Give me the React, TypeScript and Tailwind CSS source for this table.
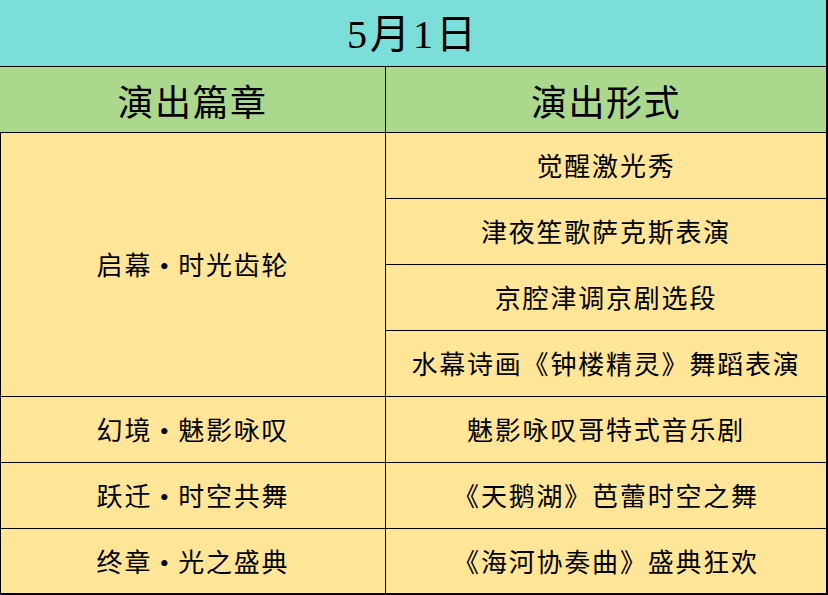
const font = "font-['Liberation_Serif','Noto_Sans_CJK_SC',serif]";

const rightRows = [
  "觉醒激光秀",
  "津夜笙歌萨克斯表演",
  "京腔津调京剧选段",
  "水幕诗画《钟楼精灵》舞蹈表演",
];

const pairs = [
  { left: ["幻境", "魅影咏叹"], right: "魅影咏叹哥特式音乐剧" },
  { left: ["跃迁", "时空共舞"], right: "《天鹅湖》芭蕾时空之舞" },
  { left: ["终章", "光之盛典"], right: "《海河协奏曲》盛典狂欢" },
];

function Chapter({ parts }: { parts: string[] }) {
  return (
    <span>
      {parts[0]}
      <span className="inline-block w-[1em] text-center">•</span>
      {parts[1]}
    </span>
  );
}

export default function App() {
  const bodyText = "text-[26px] tracking-[1.8px] text-black";
  return (
    <div className={`w-[828px] h-[595px] border-r-2 border-b-2 border-black ${font}`}>
      <div className="flex h-[67px] items-center justify-center border-b border-black bg-[#7bded8] pt-1 text-[40px] tracking-[3px] text-black">
        5月1日
      </div>
      <div className="grid grid-cols-[386px_1fr]">
        <div className="flex h-[66px] items-center justify-center border-b border-r border-black bg-[#acd88e] pt-2 text-[36px] tracking-[1.5px]">
          演出篇章
        </div>
        <div className="flex h-[66px] items-center justify-center border-b border-black bg-[#acd88e] pt-2 text-[36px] tracking-[1.5px]">
          演出形式
        </div>

        <div className={`row-span-4 flex items-center justify-center border-b border-l border-r border-black bg-[#ffe598] pt-1 ${bodyText}`}>
          <Chapter parts={["启幕", "时光齿轮"]} />
        </div>
        {rightRows.map((r) => (
          <div key={r} className={`flex h-[66px] items-center justify-center border-b border-black bg-[#ffe598] pt-1 ${bodyText}`}>
            {r}
          </div>
        ))}

        {pairs.map((p, i) => {
          const last = i === pairs.length - 1;
          const h = last ? "h-[64px]" : "h-[66px] border-b";
          return [
            <div key={p.right + "l"} className={`flex ${h} items-center justify-center border-l border-r border-black bg-[#ffe598] pt-1 ${bodyText}`}>
              <Chapter parts={p.left} />
            </div>,
            <div key={p.right} className={`flex ${h} items-center justify-center border-black bg-[#ffe598] pt-1 ${bodyText}`}>
              {p.right}
            </div>,
          ];
        })}
      </div>
    </div>
  );
}
